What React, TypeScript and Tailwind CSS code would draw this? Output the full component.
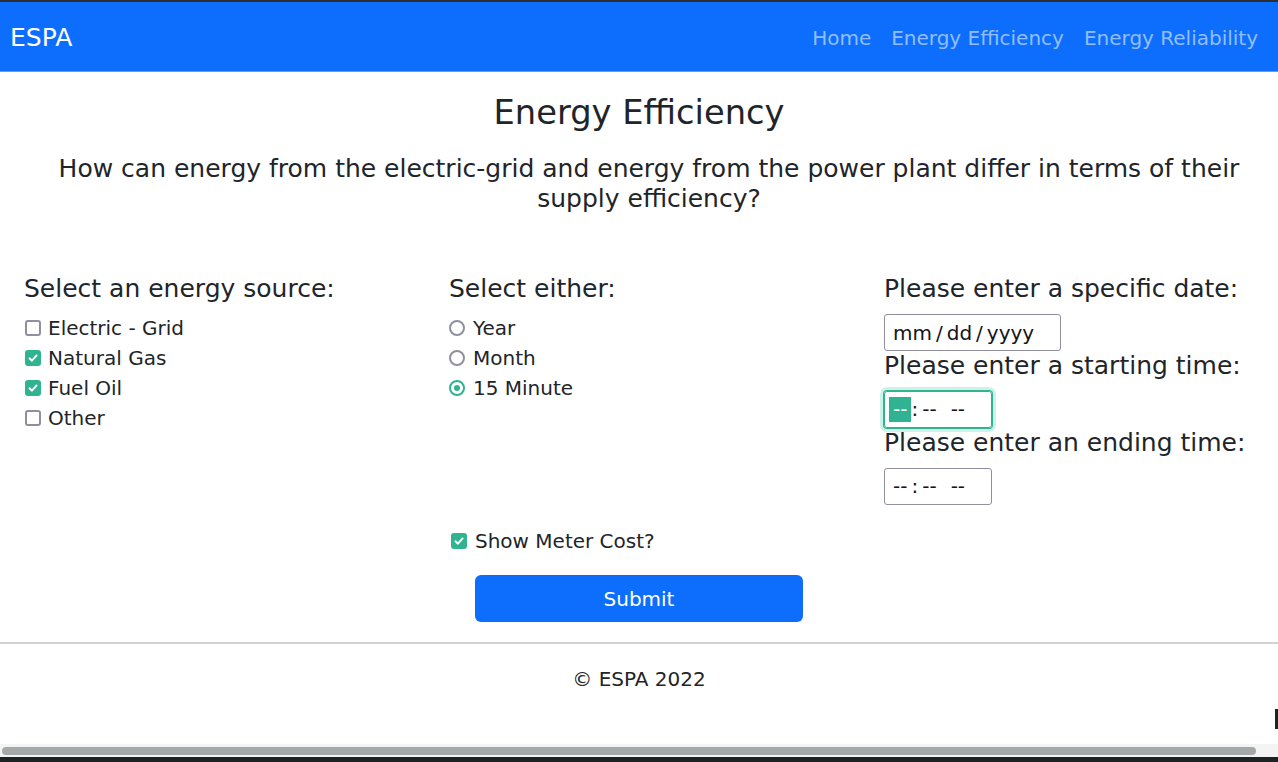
import React from "react";

const sources = [
  { label: "Electric - Grid", checked: false },
  { label: "Natural Gas", checked: true },
  { label: "Fuel Oil", checked: true },
  { label: "Other", checked: false },
];

const periods = [
  { label: "Year", checked: false },
  { label: "Month", checked: false },
  { label: "15 Minute", checked: true },
];

function CheckBox({ checked }: { checked: boolean }) {
  return checked ? (
    <span className="flex h-4 w-4 shrink-0 items-center justify-center rounded-[3px] bg-[#2fb391]">
      <svg width="12" height="12" viewBox="0 0 12 12" fill="none">
        <path d="M2.5 6.3 L5 8.7 L9.6 3.4" stroke="white" strokeWidth="1.9" strokeLinecap="round" strokeLinejoin="round" />
      </svg>
    </span>
  ) : (
    <span className="h-4 w-4 shrink-0 rounded-[3px] border-2 border-[#8f8f9d] bg-white" />
  );
}

function Radio({ checked }: { checked: boolean }) {
  return checked ? (
    <span className="flex h-4 w-4 shrink-0 items-center justify-center rounded-full border-2 border-[#2fb391] bg-white">
      <span className="h-[6px] w-[6px] rounded-full bg-[#2fb391]" />
    </span>
  ) : (
    <span className="h-4 w-4 shrink-0 rounded-full border-2 border-[#8f8f9d] bg-white" />
  );
}

function TimeBox({ focused }: { focused?: boolean }) {
  return (
    <div
      className={
        focused
          ? "flex h-[37px] w-[108px] items-center rounded-[3px] border border-[#2fb391] pl-[4px] text-[20px] text-[#15141a] shadow-[0_0_0_1px_#2fb391,0_0_0_4px_#cdf3e8]"
          : "flex h-[37px] w-[108px] items-center rounded-[3px] border border-[#8f8f9d] pl-[4px] text-[20px] text-[#15141a]"
      }
    >
      <span className={focused ? "bg-[#2fb391] px-[4px] leading-[25px] text-white" : "px-[4px] leading-[25px]"}>--</span>
      <span className="leading-[25px]">:</span>
      <span className="px-[4px] leading-[25px]">--</span>
      <span className="ml-[6px] px-[4px] leading-[25px]">--</span>
    </div>
  );
}

export default function App() {
  return (
    <div className="relative flex h-[762px] w-full flex-col overflow-hidden bg-white font-['DejaVu_Sans',sans-serif] text-[#212529]">
      <div className="h-[2px] bg-[#2a2e30]" />

      {/* Navbar */}
      <nav className="flex h-[70px] items-center justify-between border-b border-[#5c9dfd] bg-[#0d6efd] pl-[10px] pr-[20px] pt-[2px]">
        <span className="text-[25px] text-white">ESPA</span>
        <div className="flex text-[20px] text-[#92befe]">
          <span className="px-[10px]">Home</span>
          <span className="px-[10px]">Energy Efficiency</span>
          <span className="pl-[10px]">Energy Reliability</span>
        </div>
      </nav>

      <h3 className="mt-[21px] text-center text-[33.7px] leading-[40px]">Energy Efficiency</h3>
      <h5 className="mt-[21px] pl-[20px] text-center text-[25px] leading-[30px]">
        How can energy from the electric-grid and energy from the power plant differ in terms of their supply efficiency?
      </h5>

      {/* Form columns */}
      <div className="mt-[60px] grid grid-cols-[425px_435px_1fr] pl-[24px]">
        <div>
          <h5 className="mb-[9px] text-[25px] leading-[30px]">Select an energy source:</h5>
          {sources.map((s) => (
            <label key={s.label} className="flex items-center gap-[7px] pl-[1px] text-[20px] leading-[30px]">
              <CheckBox checked={s.checked} />
              {s.label}
            </label>
          ))}
        </div>
        <div>
          <h5 className="mb-[9px] text-[25px] leading-[30px]">Select either:</h5>
          {periods.map((p) => (
            <label key={p.label} className="flex items-center gap-[8px] text-[20px] leading-[30px]">
              <Radio checked={p.checked} />
              {p.label}
            </label>
          ))}
        </div>
        <div>
          <h5 className="mb-[10px] text-[25px] leading-[30px]">Please enter a specific date:</h5>
          <div className="flex h-[37px] w-[177px] items-center gap-[4px] rounded-[3px] border border-[#8f8f9d] pl-[8px] text-[20px] text-[#15141a]">
            <span>mm</span>
            <span>/</span>
            <span>dd</span>
            <span>/</span>
            <span>yyyy</span>
          </div>
          <h5 className="mb-[10px] text-[25px] leading-[30px]">Please enter a starting time:</h5>
          <TimeBox focused />
          <h5 className="mb-[10px] text-[25px] leading-[30px]">Please enter an ending time:</h5>
          <TimeBox />
        </div>
      </div>

      <div className="mt-[21px] grid grid-cols-[425px_435px_1fr] pl-[24px]">
        <label className="col-start-2 flex items-center gap-[8px] pl-[2px] text-[20px] leading-[30px]">
          <CheckBox checked />
          Show Meter Cost?
        </label>
      </div>

      <button className="mx-auto mt-[19px] h-[47px] w-[328px] rounded-[6px] bg-[#0d6efd] text-[20px] text-white">
        Submit
      </button>

      {/* Footer */}
      <div className="mt-[20px] h-[2px] bg-[#d0d1d2]" />
      <p className="mt-[20px] text-center text-[20px] leading-[30px]">© ESPA 2022</p>

      <div className="flex-1" />
      <div className="h-[13px] bg-[#f4f4f4] pl-[2px] pr-[22px] pt-[3px]">
        <div className="h-[8px] rounded-full bg-[#a5a8a8]" />
      </div>
      <div className="h-[5px] bg-[#1d2224]" />

      <div className="absolute right-0 top-[709px] h-[20px] w-[3px] bg-[#222]" />
    </div>
  );
}
